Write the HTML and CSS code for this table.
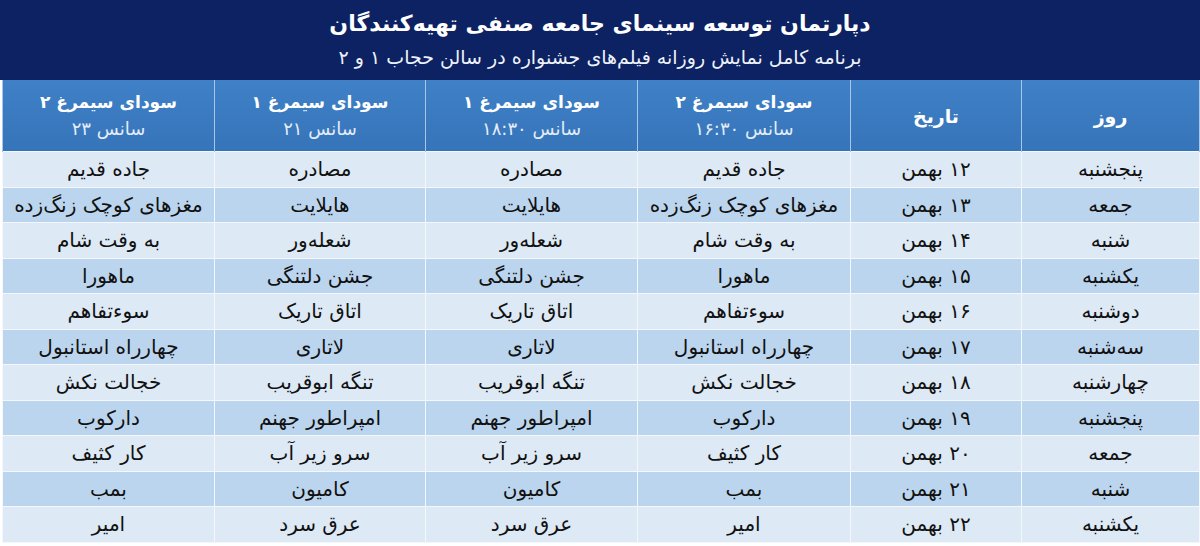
FILE: index.html
```html
<!DOCTYPE html>
<html lang="fa" dir="rtl">
<head>
<meta charset="utf-8">
<link rel="stylesheet" href="styles.css">
</head>
<body>
<div class="page">
  <header class="banner">
    <h1 class="title">دپارتمان توسعه سینمای جامعه صنفی تهیه‌کنندگان</h1>
    <p class="subtitle">برنامه کامل نمایش روزانه فیلم‌های جشنواره در سالن حجاب ۱ و ۲</p>
  </header>
  <table class="schedule">
    <colgroup>
      <col class="c-day"><col class="c-date"><col class="c-s1"><col class="c-s2"><col class="c-s3"><col class="c-s4">
    </colgroup>
    <thead>
      <tr>
        <th class="big">روز</th>
        <th class="big">تاریخ</th>
        <th><span class="hall">سودای سیمرغ ۲</span><span class="time">سانس ۱۶:۳۰</span></th>
        <th><span class="hall">سودای سیمرغ ۱</span><span class="time">سانس ۱۸:۳۰</span></th>
        <th><span class="hall">سودای سیمرغ ۱</span><span class="time">سانس ۲۱</span></th>
        <th><span class="hall">سودای سیمرغ ۲</span><span class="time">سانس ۲۳</span></th>
      </tr>
    </thead>
    <tbody>
      <tr><td>پنجشنبه</td><td>۱۲ بهمن</td><td>جاده قدیم</td><td>مصادره</td><td>مصادره</td><td>جاده قدیم</td></tr>
      <tr><td>جمعه</td><td>۱۳ بهمن</td><td>مغزهای کوچک زنگ‌زده</td><td>هایلایت</td><td>هایلایت</td><td>مغزهای کوچک زنگ‌زده</td></tr>
      <tr><td>شنبه</td><td>۱۴ بهمن</td><td>به وقت شام</td><td>شعله‌ور</td><td>شعله‌ور</td><td>به وقت شام</td></tr>
      <tr><td>یکشنبه</td><td>۱۵ بهمن</td><td>ماهورا</td><td>جشن دلتنگی</td><td>جشن دلتنگی</td><td>ماهورا</td></tr>
      <tr><td>دوشنبه</td><td>۱۶ بهمن</td><td>سوءتفاهم</td><td>اتاق تاریک</td><td>اتاق تاریک</td><td>سوءتفاهم</td></tr>
      <tr><td>سه‌شنبه</td><td>۱۷ بهمن</td><td>چهارراه استانبول</td><td>لاتاری</td><td>لاتاری</td><td>چهارراه استانبول</td></tr>
      <tr><td>چهارشنبه</td><td>۱۸ بهمن</td><td>خجالت نکش</td><td>تنگه ابوقریب</td><td>تنگه ابوقریب</td><td>خجالت نکش</td></tr>
      <tr><td>پنجشنبه</td><td>۱۹ بهمن</td><td>دارکوب</td><td>امپراطور جهنم</td><td>امپراطور جهنم</td><td>دارکوب</td></tr>
      <tr><td>جمعه</td><td>۲۰ بهمن</td><td>کار کثیف</td><td>سرو زیر آب</td><td>سرو زیر آب</td><td>کار کثیف</td></tr>
      <tr><td>شنبه</td><td>۲۱ بهمن</td><td>بمب</td><td>کامیون</td><td>کامیون</td><td>بمب</td></tr>
      <tr><td>یکشنبه</td><td>۲۲ بهمن</td><td>امیر</td><td>عرق سرد</td><td>عرق سرد</td><td>امیر</td></tr>
    </tbody>
  </table>
</div>
</body>
</html>
```

FILE: styles.css
```css
html, body {
  margin: 0;
  padding: 0;
  background: #ffffff;
}
body {
  font-family: "DejaVu Sans", "Noto Sans", sans-serif;
  color: #111111;
}
.page {
  width: 1200px;
  height: 546px;
  overflow: hidden;
}
.banner {
  height: 80px;
  background: #0c2262;
  color: #ffffff;
  display: flex;
  flex-direction: column;
  align-items: center;
  justify-content: center;
  gap: 8px;
  box-sizing: border-box;
  padding-bottom: 2px;
}
.title {
  margin: 0;
  font-size: 22px;
  font-weight: bold;
  line-height: 28px;
}
.subtitle {
  margin: 0;
  font-size: 19px;
  line-height: 22px;
  color: #eef2fa;
}
.schedule {
  width: 1197px;
  border-collapse: collapse;
  table-layout: fixed;
  margin-left: 3px;
}
.c-day { width: 178px; }
.c-date { width: 171px; }
.c-s1 { width: 213px; }
.c-s2 { width: 212px; }
.c-s3 { width: 211px; }
.c-s4 { width: 212px; }
.schedule th {
  height: 71px;
  padding: 0;
  background: linear-gradient(#3f80c6, #3674b9);
  color: #ffffff;
  font-size: 17px;
  font-weight: bold;
  border-left: 1px solid #a9c6e6;
  border-right: 1px solid #a9c6e6;
  vertical-align: middle;
  text-align: center;
}
.schedule th.big {
  font-size: 19px;
}
.hall {
  display: block;
  line-height: 26px;
}
.time {
  display: block;
  font-weight: normal;
  font-size: 18px;
  line-height: 28px;
  color: #e4edf8;
}
.schedule td {
  height: 35.5px;
  padding: 0;
  box-sizing: border-box;
  font-size: 20px;
  text-align: center;
  vertical-align: middle;
  border: 1px solid #f4f8fc;
  white-space: nowrap;
  overflow: hidden;
}
.schedule tbody tr:nth-child(odd) td { background: #dde9f5; }
.schedule tbody tr:nth-child(even) td { background: #bcd5ee; }
```
